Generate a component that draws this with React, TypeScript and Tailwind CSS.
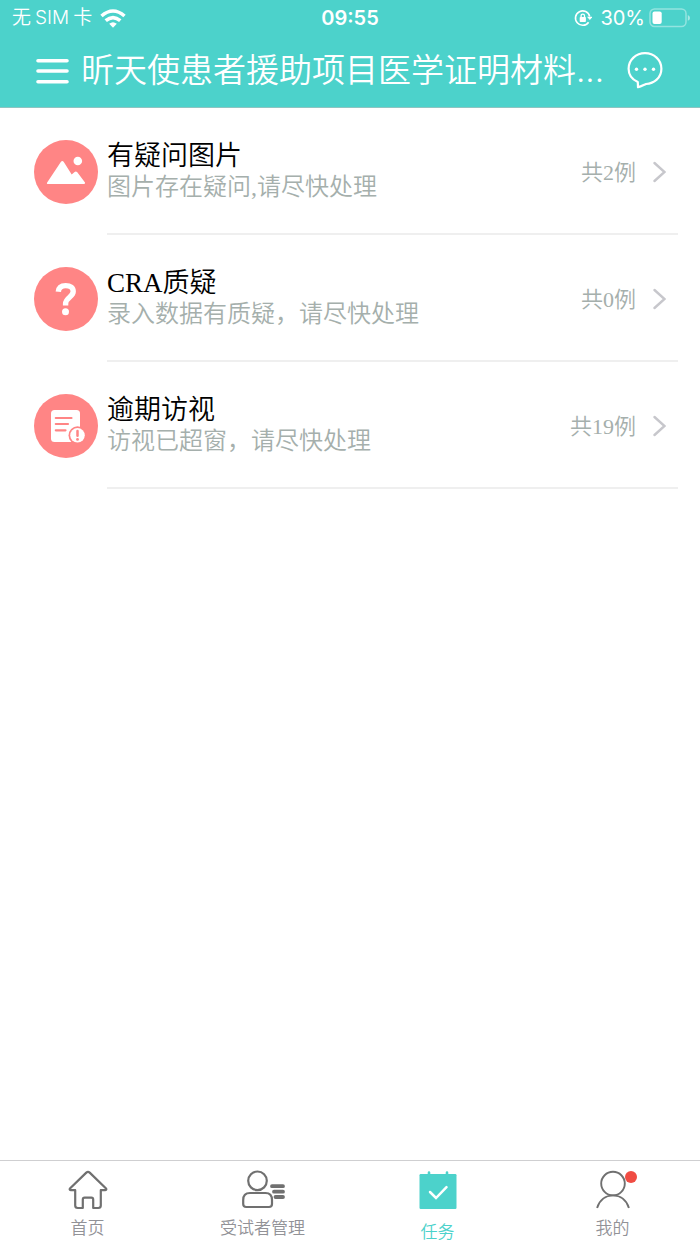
import React, { useState } from 'react';

const CJK = 'font-["Inter","Noto_Sans_CJK_SC",sans-serif]';

interface Task {
    id: string;
    title: string;
    hint: string;
    count: number;
    icon: React.ReactNode;
}

interface Tab {
    id: string;
    label: string;
    icon: React.ReactNode;
    badge?: boolean;
}

function PictureIcon() {
    return (
        <svg viewBox="0 0 64 64" className="h-full w-full" fill="#fff" aria-hidden="true">
            <path d="M13 42.800 26.800 22Q28.300 20.200 29.800 22L37.700 34.500 40.600 31.900Q42 30.900 43.300 32.300L51 42.600Q51.600 44 50 44H13.800Q12.400 44 13 42.800Z" />
            <circle cx="43.800" cy="21" r="4.300" />
        </svg>
    );
}

function QuestionIcon() {
    return (
        <svg viewBox="0 0 64 64" className="h-full w-full" fill="none" aria-hidden="true">
            <path d="M24.300 24.800C24.600 20.700 27.400 18.600 31.700 18.600C36.400 18.600 39.200 20.900 39.200 24.600C39.200 30.200 31.600 30.400 31.600 36.800V38.600" stroke="#fff" strokeWidth="5.400" />
            <circle cx="31.500" cy="44.700" r="3.500" fill="#fff" />
        </svg>
    );
}

function OverdueIcon() {
    return (
        <svg viewBox="0 0 64 64" className="h-full w-full" fill="none" aria-hidden="true">
            <rect x="17" y="16" width="29" height="32" rx="3.500" fill="#fff" />
            <path d="M21.800 24H37.500M21.800 30H34M21.800 36.300H31.500" stroke="#ff8585" strokeWidth="2.200" strokeLinecap="round" />
            <circle cx="43.500" cy="41.300" r="9" fill="#ff8585" />
            <circle cx="43.500" cy="41.300" r="7.300" fill="#fff" />
            <path d="M43.500 37V41.800" stroke="#ff8585" strokeWidth="2.500" strokeLinecap="round" />
            <circle cx="43.500" cy="45.400" r="1.400" fill="#ff8585" />
        </svg>
    );
}

function HomeIcon() {
    return (
        <svg viewBox="0 0 40 40" className="h-10 w-10" fill="none" stroke="currentColor" strokeWidth="2.200" strokeLinejoin="round" aria-hidden="true">
            <path d="M18.300 2.600 2.200 18.300C1.300 19.300 1.700 20.200 3 20.200H7.200V35.500Q7.200 38 9.700 38H14.800V29.500Q14.800 27.700 16.600 27.700H23.400Q25.200 27.700 25.200 29.500V38H30.300Q32.800 38 32.800 35.500V20.200H37C38.300 20.200 38.700 19.300 37.800 18.300L21.700 2.600Q20 1.100 18.300 2.600Z" />
        </svg>
    );
}

function SubjectsIcon() {
    return (
        <svg viewBox="0 0 44 40" className="h-10 w-11" fill="none" stroke="currentColor" strokeWidth="2.200" aria-hidden="true">
            <circle cx="16.500" cy="10.800" r="9.300" />
            <path d="M9 23H24.500Q31 23 31 30V34Q31 37 28 37H5.200Q2.200 37 2.200 34V30Q2.200 23 9 23Z" />
            <path d="M31 16.200H42M33 21.700H42M34.500 27H42" strokeWidth="3.800" strokeLinecap="round" />
        </svg>
    );
}

function TaskIcon() {
    return (
        <svg viewBox="0 0 40 40" className="h-10 w-10" fill="none" aria-hidden="true">
            <rect x="1.500" y="4" width="37" height="35" rx="1.200" fill="#4cd2cb" />
            <path d="M11 5V2.500M29 5V2.500" stroke="#4cd2cb" strokeWidth="2.600" strokeLinecap="round" />
            <path d="M12 22 18 28 28.500 17.200" stroke="#fff" strokeWidth="2.500" strokeLinecap="round" />
        </svg>
    );
}

function ProfileIcon() {
    return (
        <svg viewBox="0 0 40 40" className="h-10 w-10" fill="none" stroke="currentColor" strokeWidth="1.900" aria-hidden="true">
            <circle cx="20" cy="13.600" r="11.800" />
            <path d="M4.100 38C6.500 30.300 12.500 25.400 20 25.400S33.500 30.300 35.900 38" />
        </svg>
    );
}

function WifiIcon() {
    return (
        <svg viewBox="0 0 26 19" className="h-[19px] w-[26px]" fill="none" stroke="#fff" strokeWidth="3.600" aria-hidden="true">
            <path d="M1.500 7Q13-3 24.500 7M5.700 11.700Q13 5.500 20.300 11.700" />
            <path d="M9.200 14.800Q13 11.700 16.800 14.800L13 18.800Z" fill="#fff" stroke="none" />
        </svg>
    );
}

function RotationLockIcon() {
    return (
        <svg viewBox="0 0 18 18" className="h-[18px] w-[18px]" fill="none" stroke="#fff" strokeWidth="1.600" aria-hidden="true">
            <path d="M14.600 13.200A7.200 7.200 0 1 1 15.700 7.500" />
            <path d="M13 7.800H18.500L15.800 11Z" fill="#fff" stroke="none" />
            <rect x="5.700" y="8" width="6.200" height="5" rx=".8" fill="#fff" stroke="none" />
            <path d="M7.100 8.500V6.700Q7.100 5.200 8.800 5.200T10.500 6.700V8.500" strokeWidth="1.300" />
        </svg>
    );
}

function BatteryIcon() {
    return (
        <svg viewBox="0 0 41 20" className="h-5 w-[41px]" fill="none" aria-hidden="true">
            <rect x="1" y="1" width="36" height="17.500" rx="4.500" stroke="#fff" strokeOpacity=".4" strokeWidth="1.500" />
            <rect x="3.500" y="3.500" width="9.200" height="12.500" rx="2" fill="#fff" />
            <path d="M38.800 7Q41 8 41 9.900T38.800 12.800Z" fill="#fff" fillOpacity=".5" />
        </svg>
    );
}

function MessageIcon() {
    return (
        <svg viewBox="0 0 38 40" className="h-10 w-[38px]" fill="none" aria-hidden="true">
            <path d="M11.800 32C6 29.500 2.600 24.500 2.600 18.800C2.600 9.800 10 3.200 19 3.200S35.400 9.800 35.400 18.800C35.400 28 28 33.500 20 34C17.500 35 15.500 36.500 12 37.200Z" stroke="#fff" strokeWidth="2.200" strokeLinejoin="round" />
            <g fill="#fff">
                <circle cx="10.500" cy="19.300" r="1.700" />
                <circle cx="19" cy="19.300" r="1.700" />
                <circle cx="27.500" cy="19.300" r="1.700" />
            </g>
        </svg>
    );
}

const tasks: Task[] = [
    { id: 'picture', title: '有疑问图片', hint: '图片存在疑问,请尽快处理', count: 2, icon: <PictureIcon /> },
    { id: 'cra', title: 'CRA质疑', hint: '录入数据有质疑，请尽快处理', count: 0, icon: <QuestionIcon /> },
    { id: 'overdue', title: '逾期访视', hint: '访视已超窗，请尽快处理', count: 19, icon: <OverdueIcon /> },
];

const tabs: Tab[] = [
    { id: 'home', label: '首页', icon: <HomeIcon /> },
    { id: 'subjects', label: '受试者管理', icon: <SubjectsIcon /> },
    { id: 'tasks', label: '任务', icon: <TaskIcon /> },
    { id: 'profile', label: '我的', icon: <ProfileIcon />, badge: true },
];

function StatusBar() {
    return (
        <div className="grid h-9 grid-cols-[1fr_auto_1fr] items-center px-2.5 text-xl leading-5">
            <div className="flex items-center gap-1 pl-0.5 text-[19px] font-[350]">
                <span>无</span>
                <span>SIM</span>
                <span>卡</span>
                <span className="ml-1">
                    <WifiIcon />
                </span>
            </div>
            <span className="font-semibold">09:55</span>
            <div className="flex items-center justify-end gap-1">
                <span className="mr-1">
                    <RotationLockIcon />
                </span>
                <span>30%</span>
                <BatteryIcon />
            </div>
        </div>
    );
}

function TaskRow({ task }: { task: Task }) {
    return (
        <li>
            <button type="button" className="flex w-full pr-[22px] pl-[34px] text-left">
                <span className="mt-8 mr-[9px] h-16 w-16 shrink-0 rounded-full bg-[#ff8585]">{task.icon}</span>
                <span className="flex h-[127px] min-w-0 flex-1 items-start border-b-2 border-[#efefef] pt-8">
                    <span className="min-w-0 flex-1">
                        <span className="block text-[27px] leading-8 text-black">{task.title}</span>
                        <span className="block text-2xl leading-[30px] text-[#a5afac]">{task.hint}</span>
                    </span>
                    <span className="flex h-16 items-center gap-4 pr-3 text-[22px] text-[#a5afac]">
                        共{task.count}例
                        <svg viewBox="0 0 14 22" className="h-[22px] w-3.5" fill="none" stroke="#c7c7cc" strokeWidth="2.400" strokeLinecap="round" aria-hidden="true">
                            <path d="M2.500 2 12.500 11 2.500 20" />
                        </svg>
                    </span>
                </span>
            </button>
        </li>
    );
}

export default function App() {
    const [activeTab, setActiveTab] = useState<string>('tasks');

    return (
        <div className="flex min-h-screen flex-col bg-white">
            <header className={`border-b border-[#8fc4c1] bg-[#4cd2cb] text-white ${CJK}`}>
                <StatusBar />
                <div className="flex h-[71px] items-start px-9 pt-3.5">
                    <button type="button" aria-label="菜单" className="mt-2 mr-3 shrink-0">
                        <svg viewBox="0 0 33 26" className="h-[26px] w-[33px]" stroke="#fff" strokeWidth="3.600" strokeLinecap="round" aria-hidden="true">
                            <path d="M2 2.700H31M2 13H31M2 23.700H31" />
                        </svg>
                    </button>
                    <h1 className="min-w-0 flex-1 text-[33px] leading-10 font-[350] whitespace-nowrap">昕天使患者援助项目医学证明材料...</h1>
                    <button type="button" aria-label="消息" className="shrink-0">
                        <MessageIcon />
                    </button>
                </div>
            </header>

            <main className='flex-1 font-["Liberation_Serif","Noto_Sans_CJK_SC",serif] font-[350]'>
                <ul>
                    {tasks.map((task) => (
                        <TaskRow key={task.id} task={task} />
                    ))}
                </ul>
            </main>

            <nav className={`grid h-[84px] grid-cols-4 border-t border-[#cfcfd1] font-[350] ${CJK}`}>
                {tabs.map((tab) => {
                    const active = tab.id === activeTab;
                    return (
                        <button
                            key={tab.id}
                            type="button"
                            onClick={() => setActiveTab(tab.id)}
                            className={`flex flex-col items-center pt-[9px] text-[17px] leading-6 ${active ? 'gap-2.5 text-[#4cd2cb]' : 'gap-1.5 text-[#929297]'}`}
                        >
                            <span className={`relative ${active ? '' : 'text-[#707070]'}`}>
                                {tab.icon}
                                {tab.badge && <span className="absolute top-px -right-1 h-3 w-3 rounded-full bg-[#f04c43]" />}
                            </span>
                            {tab.label}
                        </button>
                    );
                })}
            </nav>
        </div>
    );
}
